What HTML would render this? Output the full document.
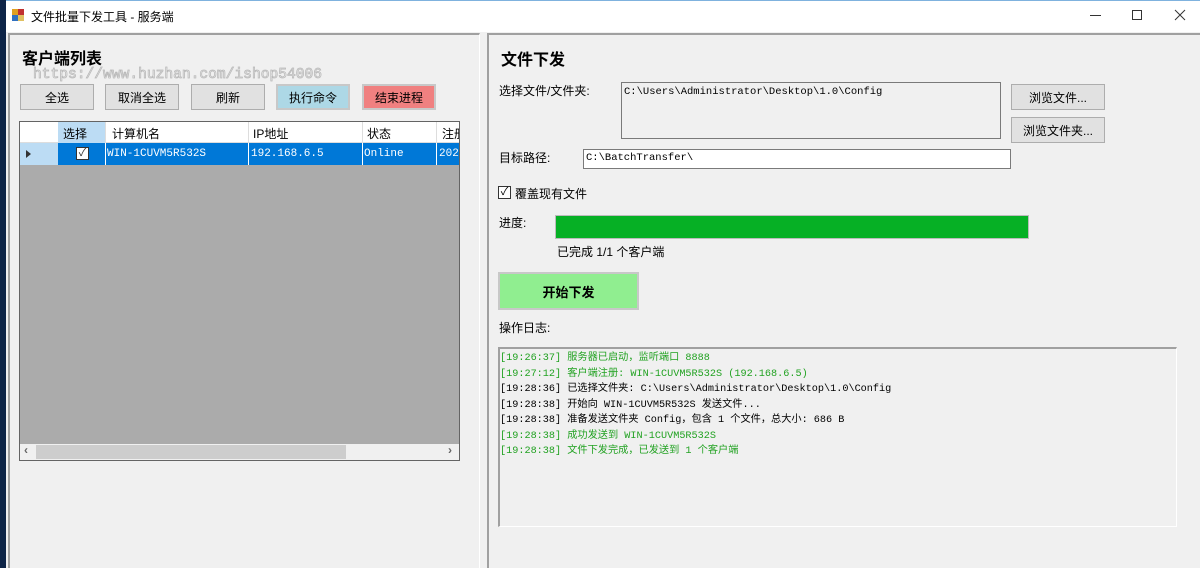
<!DOCTYPE html>
<html><head><meta charset="utf-8">
<style>
*{margin:0;padding:0;box-sizing:border-box}
body{width:1200px;height:568px;overflow:hidden;background:#f0f0f0;position:relative;font-family:"Liberation Sans","Noto Sans CJK SC",sans-serif;font-size:12px;color:#000}
.a{position:absolute}
.btn{position:absolute;background:#e1e1e1;border:1px solid #adadad;text-align:center;font-size:12px;display:flex;align-items:center;justify-content:center}
.mono{font-family:"Liberation Mono","Noto Sans CJK SC",monospace}
.g{color:#22a222}
</style></head><body>
<div class="a" style="left:0;top:0;width:6px;height:568px;background:#0d2447"></div>
<div class="a" style="left:6px;top:0;width:1194px;height:32px;background:#fff;border-top:1px solid #7fb2de"></div>
<div class="a" style="left:12px;top:9px;width:6px;height:6px;background:#e0a020"></div>
<div class="a" style="left:18px;top:9px;width:6px;height:6px;background:#c03030"></div>
<div class="a" style="left:12px;top:15px;width:6px;height:6px;background:#3070c0"></div>
<div class="a" style="left:18px;top:15px;width:6px;height:6px;background:#e0c060"></div>
<div class="a" style="left:31px;top:8px;font-size:12px">文件批量下发工具 - 服务端</div>
<div class="a" style="left:1090px;top:15px;width:11px;height:1px;background:#333"></div>
<div class="a" style="left:1132px;top:10px;width:10px;height:10px;border:1px solid #333"></div>
<svg class="a" style="left:1174px;top:9px" width="12" height="12"><path d="M1 1L11 11M11 1L1 11" stroke="#333" stroke-width="1"/></svg>

<div class="a" style="left:8px;top:33px;width:472px;height:535px;border-top:2px solid #a0a0a0;border-left:2px solid #a0a0a0;border-right:1px solid #fff"></div>
<div class="a" style="left:487px;top:33px;width:713px;height:535px;border-top:2px solid #a0a0a0;border-left:2px solid #a0a0a0"></div>

<div class="a" style="left:22px;top:45px;font-size:16px;font-weight:bold">客户端列表</div>
<div class="a" style="left:33px;top:67px;font-family:'Liberation Mono',monospace;font-size:14.6px;color:#f4f4f4;-webkit-text-stroke:0.8px #b8b8b8;white-space:nowrap">https://www.huzhan.com/ishop54006</div>

<div class="btn" style="left:20px;top:84px;width:74px;height:26px">全选</div>
<div class="btn" style="left:105px;top:84px;width:74px;height:26px">取消全选</div>
<div class="btn" style="left:191px;top:84px;width:74px;height:26px">刷新</div>
<div class="btn" style="left:276px;top:84px;width:74px;height:26px;background:#add8e6;border:2px solid #c8c8c8">执行命令</div>
<div class="btn" style="left:362px;top:84px;width:74px;height:26px;background:#f08080;border:2px solid #c8c8c8">结束进程</div>

<div class="a" style="left:19px;top:121px;width:441px;height:340px;background:#ababab;border:1px solid #646464"></div>
<div class="a" style="left:20px;top:122px;width:439px;height:21px;background:#fff;border-bottom:1px solid #ddd"></div>
<div class="a" style="left:58px;top:122px;width:48px;height:21px;background:#bcdcf4"></div>
<div class="a" style="left:63px;top:125px">选择</div>
<div class="a" style="left:112px;top:125px">计算机名</div>
<div class="a" style="left:253px;top:125px">IP地址</div>
<div class="a" style="left:367px;top:125px">状态</div>
<div class="a" style="left:442px;top:125px;width:17px;overflow:hidden;white-space:nowrap">注册</div>
<div class="a" style="left:105px;top:122px;width:1px;height:21px;background:#ddd"></div>
<div class="a" style="left:248px;top:122px;width:1px;height:21px;background:#ddd"></div>
<div class="a" style="left:362px;top:122px;width:1px;height:21px;background:#ddd"></div>
<div class="a" style="left:436px;top:122px;width:1px;height:21px;background:#ddd"></div>
<div class="a" style="left:20px;top:143px;width:38px;height:22px;background:#bcdcf4"></div>
<div class="a" style="left:26px;top:150px;width:0;height:0;border-left:5px solid #333;border-top:4px solid transparent;border-bottom:4px solid transparent"></div>
<div class="a" style="left:58px;top:143px;width:401px;height:22px;background:#0078d7"></div>
<div class="a" style="left:105px;top:143px;width:1px;height:22px;background:#fff"></div>
<div class="a" style="left:248px;top:143px;width:1px;height:22px;background:#fff"></div>
<div class="a" style="left:362px;top:143px;width:1px;height:22px;background:#fff"></div>
<div class="a" style="left:436px;top:143px;width:1px;height:22px;background:#fff"></div>
<div class="a" style="left:76px;top:147px;width:13px;height:13px;background:#fff;border:1px solid #333;font-size:11px;line-height:11px;text-align:center;color:#333">✓</div>
<div class="a mono" style="left:107px;top:148px;color:#fff;font-size:11px">WIN-1CUVM5R532S</div>
<div class="a mono" style="left:251px;top:148px;color:#fff;font-size:11px">192.168.6.5</div>
<div class="a mono" style="left:364px;top:148px;color:#fff;font-size:11px">Online</div>
<div class="a mono" style="left:439px;top:148px;color:#fff;font-size:11px;width:20px;overflow:hidden">2025</div>
<div class="a" style="left:20px;top:444px;width:439px;height:16px;background:#f0f0f0"></div>
<div class="a" style="left:36px;top:445px;width:310px;height:14px;background:#cdcdcd"></div>
<div class="a" style="left:24px;top:443px;color:#666;font-size:12px;font-weight:bold">‹</div>
<div class="a" style="left:448px;top:443px;color:#666;font-size:12px;font-weight:bold">›</div>

<div class="a" style="left:501px;top:46px;font-size:16px;font-weight:bold">文件下发</div>
<div class="a" style="left:499px;top:82px">选择文件/文件夹:</div>
<div class="a" style="left:621px;top:82px;width:380px;height:57px;background:#f0f0f0;border:1px solid #7a7a7a"></div>
<div class="a mono" style="left:624px;top:86px;font-size:10.5px">C:\Users\Administrator\Desktop\1.0\Config</div>
<div class="btn" style="left:1011px;top:84px;width:94px;height:26px">浏览文件...</div>
<div class="btn" style="left:1011px;top:117px;width:94px;height:26px">浏览文件夹...</div>
<div class="a" style="left:499px;top:149px">目标路径:</div>
<div class="a" style="left:583px;top:149px;width:428px;height:20px;background:#fff;border:1px solid #7a7a7a"></div>
<div class="a mono" style="left:586px;top:152px;font-size:10.5px">C:\BatchTransfer\</div>
<div class="a" style="left:498px;top:186px;width:13px;height:13px;border:1px solid #333;background:#fff;font-size:11px;line-height:11px;text-align:center">✓</div>
<div class="a" style="left:515px;top:185px">覆盖现有文件</div>
<div class="a" style="left:499px;top:214px">进度:</div>
<div class="a" style="left:555px;top:215px;width:474px;height:24px;background:#06b025;border:1px solid #bcbcbc"></div>
<div class="a" style="left:557px;top:243px">已完成 1/1 个客户端</div>
<div class="a" style="left:498px;top:272px;width:141px;height:38px;background:#90ee90;border:2px solid #c8c8c8;display:flex;align-items:center;justify-content:center;font-weight:bold;font-size:13px">开始下发</div>
<div class="a" style="left:499px;top:319px">操作日志:</div>
<div class="a" style="left:498px;top:347px;width:679px;height:180px;background:#f0f0f0;border-top:2px solid #a0a0a0;border-left:2px solid #a0a0a0;border-right:1px solid #fff;border-bottom:1px solid #fff"></div>
<div class="a mono" style="left:500px;top:351px;font-size:10.2px;line-height:15.5px;white-space:pre"><div class="g">[19:26:37] 服务器已启动，监听端口 8888</div><div class="g">[19:27:12] 客户端注册: WIN-1CUVM5R532S (192.168.6.5)</div><div>[19:28:36] 已选择文件夹: C:\Users\Administrator\Desktop\1.0\Config</div><div>[19:28:38] 开始向 WIN-1CUVM5R532S 发送文件...</div><div>[19:28:38] 准备发送文件夹 Config，包含 1 个文件，总大小: 686 B</div><div class="g">[19:28:38] 成功发送到 WIN-1CUVM5R532S</div><div class="g">[19:28:38] 文件下发完成，已发送到 1 个客户端</div></div>
</body></html>
